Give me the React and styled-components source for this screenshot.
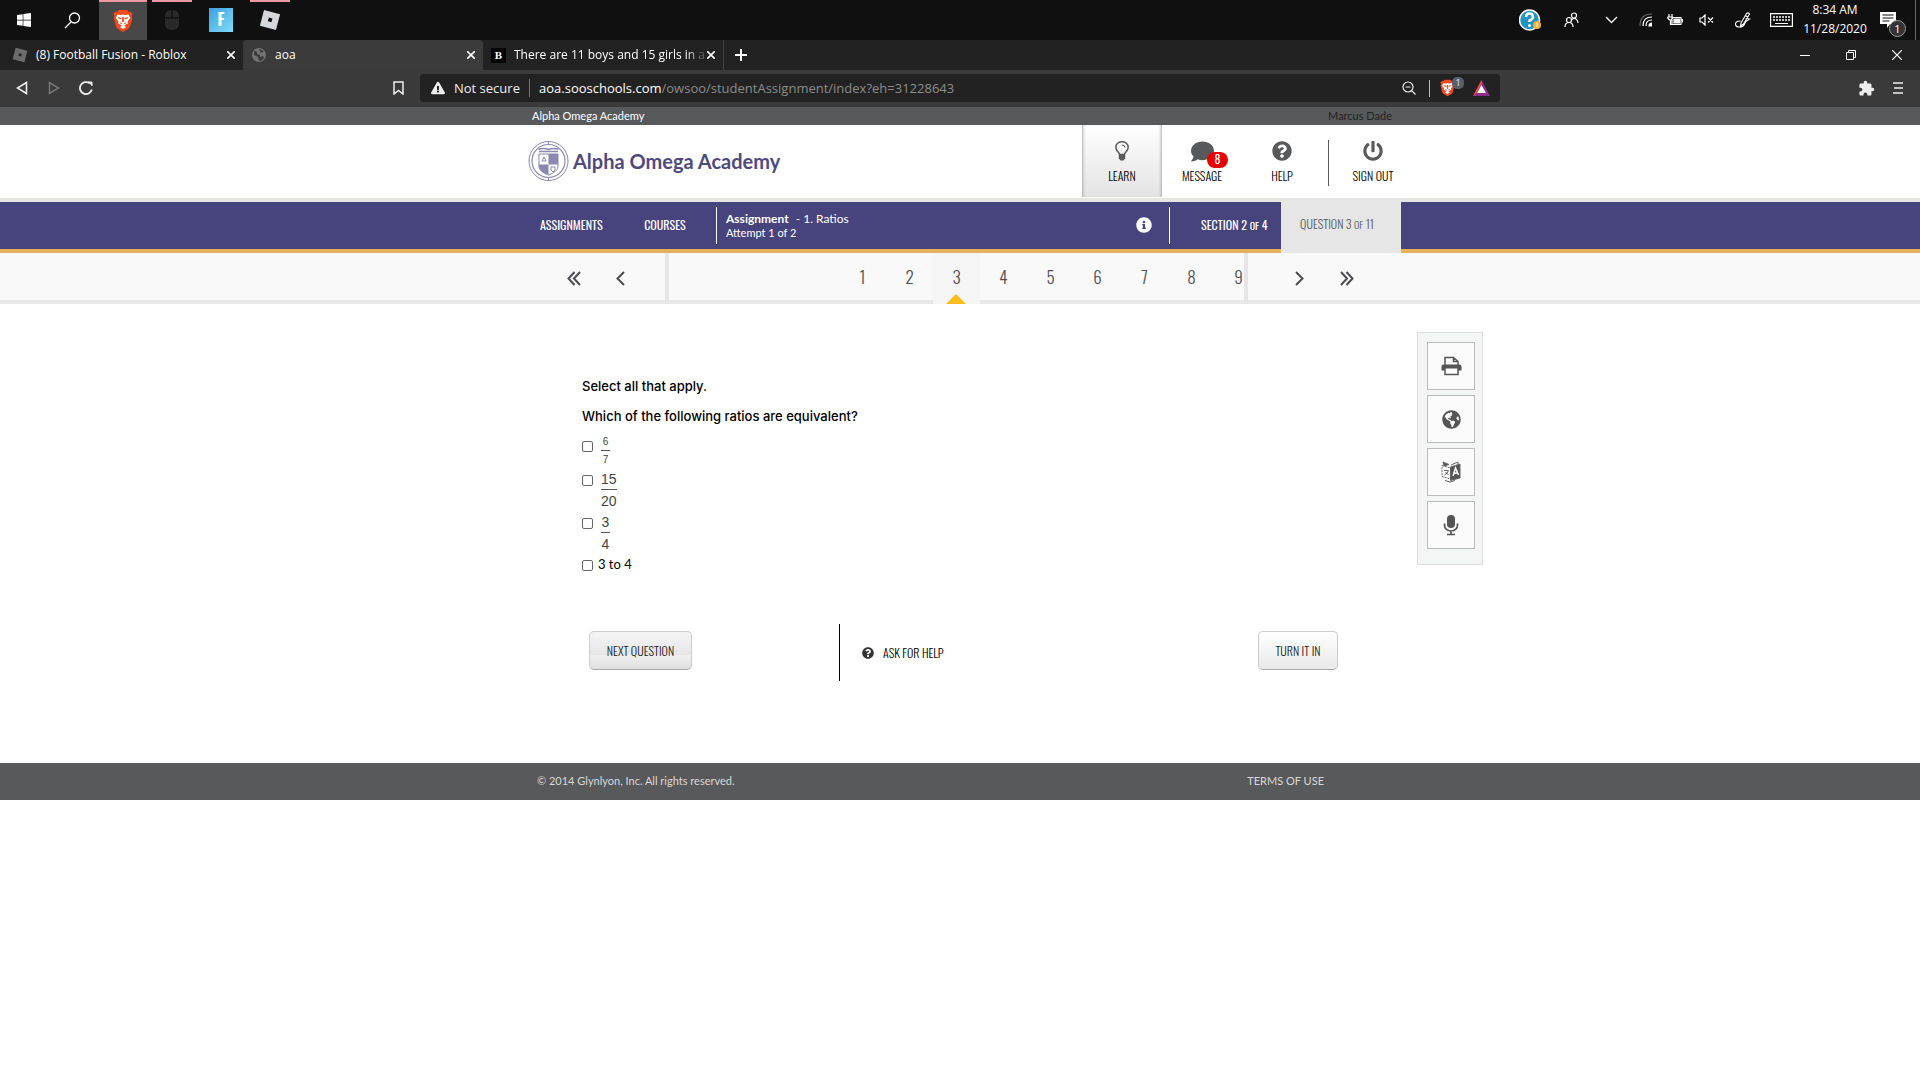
import React, { useState } from "react";
import styled, { createGlobalStyle, css } from "styled-components";
import {
  FaComment,
  FaExclamationTriangle,
  FaGlobeAmericas,
  FaInfoCircle,
  FaPowerOff,
  FaQuestionCircle,
  FaWindows,
} from "react-icons/fa";
import { MdExtension } from "react-icons/md";

const ui = `"Segoe UI", "Open Sans", "Noto Sans", sans-serif`;
const body = `"Proxima Nova", Inter, "Liberation Sans", sans-serif`;
const small = `Lato, "Liberation Sans", sans-serif`;
const narrow = `Oswald, "Liberation Sans Narrow", "Roboto Condensed", sans-serif`;

const GlobalStyle = createGlobalStyle`
  * { box-sizing: border-box; }
  body { margin: 0; background: #fff; font-family: ${body}; color: #000; }
  button, input { font: inherit; color: inherit; }
  button { padding: 0; border: 0; background: none; cursor: pointer; }
  a { color: inherit; text-decoration: none; }
  p { margin: 0; }
  svg { display: block; flex: none; }
`;

/* ---------- Windows taskbar ---------- */

const Taskbar = styled.header`
  display: flex;
  justify-content: space-between;
  height: 40px;
  background: #101010;
  color: #fff;
  font: 12px/19px ${ui};
`;

const TaskGroup = styled.div`
  display: flex;
`;

const TaskApp = styled.button`
  display: flex;
  align-items: center;
  justify-content: center;
  width: ${(p) => p.$width}px;
  margin-left: ${(p) => p.$gap || 0}px;
  border-top: 2px solid ${(p) => (p.$running ? "#ef98a4" : "transparent")};
  border-bottom: 2px solid transparent;
  background: ${(p) => (p.$active ? "#484848" : "transparent")};
  background-clip: padding-box;
  ${(p) => p.$active && css`border-bottom-color: #484848;`}
`;

const TrayItem = styled.button`
  display: flex;
  align-items: center;
  justify-content: center;
  width: ${(p) => p.$width}px;
`;

const Clock = styled.time`
  width: 74px;
  text-align: center;
`;

const ShowDesktop = styled.span`
  width: 5px;
  border-left: 1px solid #666;
  margin-left: 7px;
`;

const Notice = styled.button`
  position: relative;
  display: flex;
  align-items: center;
  justify-content: center;
  width: 32px;
  margin: 0 4px 0 0;
`;

const NoticeCount = styled.span`
  position: absolute;
  right: -2px;
  bottom: 3px;
  width: 17px;
  height: 17px;
  border: 1px solid #999;
  border-radius: 50%;
  background: #333;
  font-size: 11px;
  line-height: 15px;
`;

/* ---------- Browser chrome ---------- */

const TabStrip = styled.nav`
  display: flex;
  height: 30px;
  background: #222;
  color: #fff;
  font: 12px/30px ${ui};
`;

const Tab = styled.div`
  display: flex;
  align-items: center;
  width: 240px;
  padding: 0 6px 0 8px;
  background: ${(p) => (p.$active ? "#3b3b3b" : "transparent")};
  border-radius: 4px 4px 0 0;
  ${(p) => p.$first && css`width: 243px; padding-left: 12px;`}
`;

const TabTitle = styled.a`
  flex: 1;
  min-width: 0;
  margin-left: 8px;
  white-space: nowrap;
  ${(p) => p.$fade && css`mask-image: linear-gradient(90deg, #000 90%, #0004 98%);`}
`;

const TabClose = styled.button`
  display: grid;
  place-items: center;
  width: 12px;
  height: 12px;
`;

const NewTab = styled.button`
  width: 34px;
  display: grid;
  place-items: center;
  border-left: 1px solid #444;
`;

const WindowControls = styled.div`
  display: flex;
  margin-left: auto;
`;

const WindowButton = styled.button`
  display: grid;
  place-items: center;
  width: 46px;
`;

const AddressRow = styled.div`
  display: flex;
  align-items: center;
  height: 37px;
  padding: 0 14px 1px;
  background: #3a3a3a;
  color: #eee;
  font: 14px/28px ${ui};
`;

const ChromeButton = styled.button`
  display: grid;
  place-items: center;
  width: 16px;
  height: 20px;
  margin-right: ${(p) => p.$after || 0}px;
`;

const AddressBox = styled.form`
  display: flex;
  align-items: center;
  flex: 0 1 1080px;
  height: 28px;
  margin: 0 auto 0 14px;
  padding: 0 11px;
  border-radius: 4px;
  background: #222;
  font-size: 13px;
`;

const Site = styled.label`
  margin-left: 9px;
  color: #fff;
`;

const Insecure = styled.span`
  width: 67px;
  margin-left: 9px;
  white-space: nowrap;
`;

const PathInput = styled.input`
  flex: 1;
  min-width: 0;
  padding: 0;
  border: 0;
  outline: 0;
  background: none;
  color: #8c8c8c;
`;

const ThinBar = styled.span`
  width: 1px;
  height: ${(p) => p.$height}px;
  margin-left: ${(p) => p.$gap || 8}px;
  background: ${(p) => p.$color || "#777"};
`;

const Shield = styled.button`
  position: relative;
  width: 20px;
  margin: 0 13px 0 10px;
`;

const ShieldCount = styled.span`
  position: absolute;
  left: 12px;
  top: -2px;
  width: 12px;
  height: 12px;
  border-radius: 5px;
  background: #5a5e6c;
  font-size: 9px;
  line-height: 12px;
  text-align: center;
`;

/* ---------- Page ---------- */

const Wrap = styled.div`
  display: flex;
  width: 882px;
  max-width: 100%;
  height: 100%;
  margin: 0 auto;
`;

const AccountBar = styled.div`
  height: 18px;
  background: #58595b;
  color: #fff;
  font: 11px/18px ${small};
`;

const SchoolName = styled.a`
  margin-left: 13px;
`;

const UserName = styled.a`
  margin-left: auto;
  margin-right: 9px;
  color: #222;
`;

const Masthead = styled.div`
  height: 77px;
  border-bottom: 4px solid #e6e6e3;
`;

const Brand = styled.a`
  display: flex;
  align-items: center;
  gap: 4px;
  margin-left: 9px;
  padding-bottom: 1px;
  color: #4e4a80;
  font: 700 20px/24px Lato, sans-serif;
`;

const MainMenu = styled.nav`
  display: flex;
  margin-left: auto;
`;

const MenuLink = styled.a`
  position: relative;
  display: flex;
  flex-direction: column;
  align-items: center;
  width: ${(p) => p.$width || 80}px;
  height: 72px;
  padding-top: 15px;
  color: #58595b;
  ${(p) =>
    p.$active &&
    css`
      background: linear-gradient(#fff, #e3e3e3);
      box-shadow: inset 3px 0 3px -2px #aaa, inset -3px 0 3px -2px #aaa;
    `}
`;

const MenuText = styled.span`
  margin-top: 5px;
  color: #000;
  font: 300 12px/18px ${narrow};
  white-space: nowrap;
`;

const IconBox = styled.span`
  display: grid;
  place-items: center;
  height: 22px;
`;

const MessageCount = styled.span`
  position: absolute;
  left: 45px;
  top: 27px;
  width: 21px;
  height: 16px;
  border-radius: 8px;
  background: #e60000;
  color: #fff;
  font: 12px/14px ${narrow};
  text-align: center;
`;

const MenuRule = styled.span`
  width: 1px;
  height: 46px;
  margin: 15px 16px 0 6px;
  background: #58595b;
`;

const CourseBar = styled.nav`
  height: 51px;
  border-bottom: 4px solid #e6b158;
  background: #47437d;
  color: #fff;
`;

const CourseLink = styled.a`
  width: ${(p) => p.$width}px;
  margin-left: ${(p) => p.$before}px;
  font: 12px/46px ${narrow};
  text-align: center;
  white-space: nowrap;
`;

const CourseRule = styled.span`
  width: 1px;
  height: 37px;
  margin: 5px 0 0 ${(p) => p.$before}px;
  background: #fff;
`;

const AssignmentInfo = styled.div`
  margin: 9px auto 0 9px;
  font: 12px/16px ${small};
`;

const Attempt = styled.p`
  font-size: 11px;
  line-height: 12px;
`;

const Gap = styled.span`
  margin-left: 7px;
`;

const InfoButton = styled.button`
  height: 46px;
`;

const Small = styled.span`
  font-size: 10px;
`;

const QuestionTab = styled.a`
  width: 120px;
  height: 55px;
  margin-top: -4px;
  margin-left: 16px;
  padding-right: 27px;
  background: #e6e6e6;
  color: #58595b;
  font: 300 12px/52px ${narrow};
  text-align: right;
  white-space: nowrap;
`;

const Pager = styled.nav`
  height: 51px;
  border-bottom: 4px solid #e8e8e8;
  background: #f9f9f9;
  color: #4c4d4f;
`;

const PagerEnd = styled.div`
  display: flex;
  width: ${(p) => p.$width}px;
  padding-left: ${(p) => p.$before}px;
`;

const PagerArrow = styled.button`
  display: grid;
  place-items: center;
  width: 47px;
  height: 50px;
`;

const Numbers = styled.div`
  display: flex;
  flex: 1;
  height: 51px;
  padding-left: 170px;
  border: solid #e6e6e6;
  border-width: 0 4px;
  overflow: hidden;
`;

const NumberLink = styled.a`
  position: relative;
  flex: 0 0 47px;
  height: 51px;
  font: 300 17px/48px ${narrow};
  text-align: center;
  ${(p) =>
    p.$current &&
    css`
      background: #f5f5f5;
      &::after {
        content: "";
        position: absolute;
        left: 13px;
        bottom: 0;
        border: solid transparent;
        border-width: 0 10px 10px;
        border-bottom-color: #fbbc1c;
      }
    `}
`;

const Workspace = styled.main`
  display: grid;
  grid-template-columns: 1fr 882px 1fr;
  padding-top: 28px;
`;

const Question = styled.section`
  grid-column: 2;
  padding: 44px 63px 82px;
`;

const Prompt = styled.p`
  font: 500 13px/20px ${body};
  margin-bottom: 10px;
`;

const Choice = styled.label`
  display: flex;
  align-items: flex-start;
  height: ${(p) => p.$height}px;
  width: 100px;
`;

const Tick = styled.input`
  width: 11px;
  height: 11px;
  margin: ${(p) => p.$top}px 0 0;
  appearance: none;
  border: 1px solid #666;
  border-radius: 2px;
  background: #fff;
  &:checked { background: #0075ff; }
`;

const Fraction = styled.span`
  display: inline-flex;
  flex-direction: column;
  align-items: center;
  margin-left: 8px;
  color: #444;
  font: ${(p) => (p.$small ? "10px/12px" : "14px/16px")} "Liberation Sans", Arial, sans-serif;
`;

const Over = styled.span`
  min-width: 9px;
  padding-bottom: 2px;
  border-bottom: 1px solid #555;
  margin-bottom: 3px;
  text-align: center;
`;

const Plain = styled.span`
  margin-left: 5px;
  font: 13px/16px ${small};
`;

const Actions = styled.div`
  display: flex;
  align-items: center;
  height: 57px;
  margin-top: 46px;
  padding-left: 7px;
`;

const ActionButton = styled.button`
  width: ${(p) => p.$width}px;
  height: 39px;
  margin-bottom: 4px;
  border: 1px solid #ccc;
  border-bottom-color: #aaa;
  border-radius: 5px;
  background: ${(p) => (p.$shaded ? "linear-gradient(#f5f5f5, #e6e6e6 62%, #f0f0f0 63%, #dfdfdf)" : "linear-gradient(#fff, #e9e9e9)")};
  color: #222;
  font: 300 12px/37px ${narrow};
`;

const ActionRule = styled.span`
  width: 1px;
  height: 57px;
  margin: 0 22px 0 147px;
  background: #000;
`;

const AskLink = styled.a`
  display: flex;
  align-items: center;
  gap: 9px;
  margin-right: auto;
  font: 300 12px/18px ${narrow};
`;

const Tools = styled.aside`
  display: flex;
  flex-direction: column;
  gap: 5px;
  width: 66px;
  height: 233px;
  margin-left: 16px;
  padding: 9px;
  border: 1px solid #dedede;
  background: #f4f5f5;
`;

const ToolButton = styled.button`
  display: grid;
  place-items: center;
  height: 48px;
  width: 48px;
  border: 1px solid #bbb;
  background: #fbfbfb;
  color: #555;
`;

const Footer = styled.footer`
  height: 37px;
  background: #58595b;
  color: #d8d8d8;
  font: 11px/36px ${small};
`;

const Copyright = styled.span`
  margin-left: 18px;
`;

const Terms = styled.a`
  margin-left: auto;
  margin-right: 77px;
`;

/* ---------- Drawings ---------- */

const BraveIcon = ({ size }) => (
  <svg width={size} height={size * 1.15} viewBox="0 0 20 23">
    <path fill="#f2491f" d="M6 1h8l2 2 2-.3L19.500 5l-.8 2 .6 2-2.300 8.500c-.3 1-1 1.800-2 2.400L10 23l-5-3.100c-1-.6-1.700-1.400-2-2.400L.7 9l.6-2-.8-2L2 2.700 4 3z" />
    <path fill="#fff" d="M4.500 5.500 8 6l2-.6L12 6l3.500-.5L17.300 9 14.500 12.500l.5 1.800-3 1.700-.5 1 1.500 1-3 2-3-2 1.500-1-.5-1-3-1.700.5-1.800L2.700 9z" />
    <path fill="#f2491f" d="m4.700 8 3.800 1-.3 1.500-2.500-.7zM15.300 8l-3.800 1 .3 1.500 2.500-.7zM9.300 8h1.400l.4 4.500-1.100.7-1.100-.7zM6.500 13l3 1.500-1.500.8zM13.500 13l-3 1.500 1.500.8z" />
  </svg>
);

const RobloxIcon = ({ size, light, hole }) => (
  <svg width={size} height={size} viewBox="0 0 24 24">
    <path fill={light} d="M5.500 1 23 5.700 18.500 23 1 18.300z" />
    <path fill={hole} d="m10.700 9.300 4 1.100-1.100 4-4-1.100z" />
  </svg>
);

const MouseIcon = () => (
  <svg width="14" height="20" viewBox="0 0 14 20">
    <rect width="14" height="20" rx="6" fill="#292929" />
    <path d="M0 8h14M7 0v8" stroke="#101010" strokeWidth="1.500" />
  </svg>
);

const FortniteTile = styled.span`
  display: block;
  width: 24px;
  height: 24px;
  background: linear-gradient(135deg, #3f9fe0, #7fdcf8);
  color: #fff;
  font: 700 16px/23px ${narrow};
  text-align: center;
`;

const Cross = ({ size = 8, weight = 2 }) => (
  <svg width={size} height={size} viewBox="0 0 10 10">
    <path d="m0 0 10 10M10 0 0 10" stroke="currentColor" strokeWidth={weight} />
  </svg>
);

const Line = ({ w, h, box, d, weight = 1, fill = "none", children }) => (
  <svg width={w} height={h} viewBox={box || `0 0 ${w} ${h}`} fill={fill} stroke="currentColor" strokeWidth={weight}>
    {d && <path d={d} />}
    {children}
  </svg>
);

const BrainlyMark = styled.span`
  width: 15px;
  height: 15px;
  background: #000;
  font: 700 11px/15px "Liberation Serif", serif;
  text-align: center;
`;

const Seal = () => (
  <svg width="41" height="42" viewBox="0 0 41 42" fill="none" stroke="#8a87b0">
    <circle cx="20.500" cy="21" r="19.500" />
    <circle cx="20.500" cy="21" r="16.500" strokeWidth="1.200" />
    <path d="M10.500 9.500q5-2 10 0 5-2 10 0M11 11.500h19" strokeWidth="1.500" />
    <path d="M11 14h19v13q-1 5-9.500 8-8.500-3-9.500-8z" fill="#fff" />
    <path d="M20.500 14H30v10.500h-9.500zM11 24.500h9.500V35q-8.500-3-9.500-8z" fill="#8a87b0" stroke="none" />
    <path d="m14 21 2-4 2 4zM23 27h4v3l-2 2-2-2z" />
    <path d="M20.500 1v4M20.500 37v4" />
  </svg>
);

const Bulb = () => (
  <svg width="14" height="20" viewBox="0 0 14 20" fill="none" stroke="#58595b" strokeWidth="1.500">
    <path d="M4.500 13.500c0-2.500-3.700-3.500-3.700-7.300a6.200 5.500 0 0 1 12.400 0c0 3.800-3.700 4.800-3.700 7.300z" />
    <path d="M7 4q2.800 0 3 2.500" strokeWidth="1" />
    <path d="M3.800 13.500h6.400v4L8.500 19.500h-3L3.800 17.500z" fill="#58595b" stroke="none" />
  </svg>
);

const Printer = () => (
  <svg width="21" height="20" viewBox="0 0 21 20" fill="none" stroke="#555" strokeWidth="1.500">
    <path d="M4 9V1.500h8.500L17 5.500V9M12.500 1.500v4H17" />
    <path d="M2.500 8.500h16a2 2 0 0 1 2 2v4H17v-2H4v2H.5v-4a2 2 0 0 1 2-2z" fill="#555" stroke="none" />
    <path d="M4 12v6.500h13V12" />
  </svg>
);

const Translate = () => (
  <svg width="20" height="22" viewBox="0 0 20 22" fill="none" stroke="#666">
    <path d="M1 4.500 9.500 7v11L1 15.500z" strokeDasharray="2 1" />
    <path d="M9.500 6 19 3v14l-9.500 2.500z" fill="#555" />
    <path d="m2 1 6 2.500L3 5z" fill="#555" />
    <path d="m10 4 7-3v3M3 9.500h4.500q-1 3-4 4.500m1-3 3 3M4 19.500q5 3 10 0" />
    <path d="m12 15 2.500-8 3 7M13 12.500l3.500-.8" stroke="#fff" strokeWidth="1.500" />
  </svg>
);

const Mic = () => (
  <svg width="16" height="22" viewBox="0 0 16 22" fill="none" stroke="#555" strokeWidth="1.700">
    <rect x="4" y="1" width="8" height="13" rx="4" fill="#555" stroke="none" />
    <path d="M1.500 9.500v2a6.500 5.500 0 0 0 13 0v-2M8 17v3.500M4 20.500h8" />
  </svg>
);

/* ---------- Screen ---------- */

const choices = [
  { id: "c1", height: 35, tick: 5, small: true, top: "6", bottom: "7" },
  { id: "c2", height: 43, tick: 4, top: "15", bottom: "20" },
  { id: "c3", height: 42, tick: 4, top: "3", bottom: "4" },
  { id: "c4", height: 22, tick: 4, text: "3 to 4" },
];

function ChoiceRow({ item, checked, onToggle }) {
  return (
    <Choice $height={item.height} htmlFor={item.id}>
      <Tick id={item.id} type="checkbox" $top={item.tick} checked={checked} onChange={onToggle} />
      {item.text ? (
        <Plain>{item.text}</Plain>
      ) : (
        <Fraction $small={item.small}>
          <Over>{item.top}</Over>
          <span>{item.bottom}</span>
        </Fraction>
      )}
    </Choice>
  );
}

export default function App() {
  const [picked, setPicked] = useState({});
  return (
    <>
      <GlobalStyle />
      <Taskbar>
        <TaskGroup>
          <TaskApp $width={48} aria-label="Start"><FaWindows size={16} /></TaskApp>
          <TaskApp $width={48} aria-label="Search">
            <Line w={17} h={17} weight={1.3}><circle cx="10.500" cy="6" r="5" /><path d="m7 10-6 6" /></Line>
          </TaskApp>
          <TaskApp $width={48} $gap={3} $running $active aria-label="Brave"><BraveIcon size={20} /></TaskApp>
          <TaskApp $width={40} $gap={5} $running aria-label="Mouse"><MouseIcon /></TaskApp>
          <TaskApp $width={40} $gap={9} aria-label="Fortnite"><FortniteTile>F</FortniteTile></TaskApp>
          <TaskApp $width={40} $gap={9} $running aria-label="Roblox"><RobloxIcon size={22} light="#d5d7da" hole="#111" /></TaskApp>
        </TaskGroup>
        <TaskGroup>
          <TrayItem $width={40} aria-label="Support">
            <svg width="22" height="22" viewBox="0 0 22 22">
              <circle cx="10.500" cy="11" r="10" fill="#2196c4" stroke="#fff" strokeWidth="1.500" />
              <path d="M7 8q0-3.500 3.500-3.500T14 8q0 2-3.500 3.500V13" fill="none" stroke="#fff" strokeWidth="2.500" />
              <circle cx="10.500" cy="16.500" r="1.500" fill="#fff" />
              <circle cx="18" cy="16" r="4" fill="#efb035" />
              <path d="M18 13.500v5" stroke="#fff" />
            </svg>
          </TrayItem>
          <TrayItem $width={42} aria-label="People">
            <Line w={15} h={16} weight={1.2}>
              <circle cx="10" cy="3.500" r="2.500" /><circle cx="5" cy="8" r="2.500" />
              <path d="M1 15q0-4.500 4-4.500T9 15M7.500 8Q10 5.500 12 7q2 1.500 2 4" />
            </Line>
          </TrayItem>
          <TrayItem $width={38} aria-label="More"><Line w={13} h={8} weight={1.4} d="m1 1 5.500 5.500L12 1" /></TrayItem>
          <TrayItem $width={30} aria-label="Network">
            <Line w={13} h={14} weight={1.2}>
              <path d="M1 13Q1 1 13 1" stroke="#666" /><path d="M4 13q0-9 9-9M7 13q0-6 6-6" /><path d="M10 13q0-3 3-3v3z" fill="#fff" />
            </Line>
          </TrayItem>
          <TrayItem $width={30} aria-label="Battery">
            <Line w={16} h={12} weight={1.2}>
              <path d="M5 3.500h9v7H5zM2 0v3M5 0v3M.5 3h5q0 3-2 3t-3-3M3.500 6v4.500H5" /><path d="M7 5h5.500v4H7zM14.500 5.500h1v3" fill="#fff" />
            </Line>
          </TrayItem>
          <TrayItem $width={32} aria-label="Volume"><Line w={15} h={12} weight={1.2} d="M1 4h2l3-3v10L3 8H1zM9 3.500l5 5m0-5-5 5" /></TrayItem>
          <TrayItem $width={42} aria-label="Pen">
            <Line w={16} h={16} weight={1.1} d="M6 11 11.500 1.500q2-1.500 3 .5L8.500 12 5.500 14zM10 3.500l3 1.500M5.500 9q-5 0-5 3t4 3 5-3q1-3 5-5-2-1-4 0" />
          </TrayItem>
          <TrayItem $width={34} aria-label="Keyboard">
            <Line w={23} h={14} weight={1.2}><path d="M.6.6h21.800v12.800H.6zM5 10.500h13" /><path d="M3 4h17M3 7h17" strokeWidth="1.500" strokeDasharray="2 1" /></Line>
          </TrayItem>
          <Clock dateTime="2020-11-28T08:34">8:34 AM<br />11/28/2020</Clock>
          <Notice aria-label="Notifications">
            <svg width="16" height="16" viewBox="0 0 16 16"><path d="M0 0h16v12h-6l-3 4v-4H0z" fill="#fff" /><path d="M2.500 3h11M2.500 6h11M2.500 9h7" stroke="#111" /></svg>
            <NoticeCount>1</NoticeCount>
          </Notice>
          <ShowDesktop />
        </TaskGroup>
      </Taskbar>

      <TabStrip>
        <Tab $first>
          <RobloxIcon size={16} light="#6c6c6c" hole="#222" />
          <TabTitle href="#roblox">(8) Football Fusion - Roblox</TabTitle>
          <TabClose aria-label="Close tab"><Cross /></TabClose>
        </Tab>
        <Tab $active>
          <svg width="16" height="16" viewBox="0 0 16 16"><circle cx="8" cy="8" r="7" fill="#737373" /><path d="M3 4q4 0 3 3l3 1v2l3-1 1 2-3 3q-3 0-3-4L3 8zM8 2l5 2-3 2z" fill="#3b3b3b" /></svg>
          <TabTitle href="#aoa">aoa</TabTitle>
          <TabClose aria-label="Close tab"><Cross /></TabClose>
        </Tab>
        <Tab>
          <BrainlyMark>B</BrainlyMark>
          <TabTitle href="#boys" $fade>There are 11 boys and 15 girls in a</TabTitle>
          <TabClose aria-label="Close tab"><Cross /></TabClose>
        </Tab>
        <NewTab aria-label="New tab"><Line w={12} h={12} weight={2} d="M6 0v12M0 6h12" /></NewTab>
        <WindowControls>
          <WindowButton aria-label="Minimize"><Line w={10} h={10} d="M0 5.500h10" /></WindowButton>
          <WindowButton aria-label="Restore"><Line w={10} h={10} d="M.5 2.500h7v7h-7zM2.500 2.500v-2h7v7h-2" /></WindowButton>
          <WindowButton aria-label="Close"><Cross size={10} weight={1.2} /></WindowButton>
        </WindowControls>
      </TabStrip>

      <AddressRow>
        <ChromeButton $after={16} aria-label="Back"><Line w={12} h={14} weight={1.6} d="M10.500 1.500v11L1.500 7z" /></ChromeButton>
        <ChromeButton $after={16} aria-label="Forward"><svg width="12" height="14" fill="none" stroke="#777" strokeWidth="1.500"><path d="M1.500 1.500v11l9-5.500z" /></svg></ChromeButton>
        <ChromeButton $after={296} aria-label="Reload">
          <Line w={14} h={14} weight={1.8}><path d="M12.800 8.500A6 6 0 1 1 10.500 2.200" /><path d="M9 1h4v4" fill="currentColor" strokeWidth="1" /></Line>
        </ChromeButton>
        <ChromeButton aria-label="Bookmark"><Line w={11} h={14} weight={1.5} d="M1 1h9v12l-4.500-3.500L1 13z" /></ChromeButton>
        <AddressBox onSubmit={(e) => e.preventDefault()}>
          <FaExclamationTriangle size={14} />
          <Insecure>Not secure</Insecure>
          <ThinBar $height={18} />
          <Site htmlFor="path">aoa.sooschools.com</Site>
          <PathInput id="path" defaultValue="/owsoo/studentAssignment/index?eh=31228643" />
          <ChromeButton type="button" aria-label="Zoom"><Line w={14} h={14} weight={1.2}><circle cx="6" cy="6" r="5" /><path d="m9.500 9.500 4 4M3.500 6h5" /></Line></ChromeButton>
          <ThinBar $height={17} $gap={12} $color="#bbb" />
          <Shield type="button" aria-label="Shields"><BraveIcon size={15} /><ShieldCount>1</ShieldCount></Shield>
          <ChromeButton type="button" aria-label="Rewards">
            <svg width="17" height="16" viewBox="0 0 17 16"><path d="M8.500 0 17 16H0z" fill="#8a2c8c" /><path d="M8.500 0 0 16l3-2 6-11z" fill="#f0502c" /><path d="m8.500 5 4.500 8H4z" fill="#fff" /></svg>
          </ChromeButton>
        </AddressBox>
        <ChromeButton $after={16} aria-label="Extensions"><MdExtension size={17} /></ChromeButton>
        <ChromeButton aria-label="Menu"><Line w={10} h={12} weight={1.6} d="M0 1h10M1 6h9M0 11h10" /></ChromeButton>
      </AddressRow>

      <AccountBar>
        <Wrap>
          <SchoolName href="#school">Alpha Omega Academy</SchoolName>
          <UserName href="#user">Marcus Dade</UserName>
        </Wrap>
      </AccountBar>

      <Masthead>
        <Wrap>
          <Brand href="#home"><Seal />Alpha Omega Academy</Brand>
          <MainMenu>
            <MenuLink href="#learn" $active><IconBox><Bulb /></IconBox><MenuText>LEARN</MenuText></MenuLink>
            <MenuLink href="#message">
              <IconBox><FaComment size={23} /></IconBox>
              <MenuText>MESSAGE</MenuText>
              <MessageCount>8</MessageCount>
            </MenuLink>
            <MenuLink href="#help"><IconBox><FaQuestionCircle size={20} /></IconBox><MenuText>HELP</MenuText></MenuLink>
            <MenuRule />
            <MenuLink href="#out" $width={56}><IconBox><FaPowerOff size={20} /></IconBox><MenuText>SIGN OUT</MenuText></MenuLink>
          </MainMenu>
        </Wrap>
      </Masthead>

      <CourseBar>
        <Wrap>
          <CourseLink href="#assignments" $width={62} $before={21}>ASSIGNMENTS</CourseLink>
          <CourseLink href="#courses" $width={42} $before={42}>COURSES</CourseLink>
          <CourseRule $before={30} />
          <AssignmentInfo>
            <p><b>Assignment</b><Gap>- 1. Ratios</Gap></p>
            <Attempt>Attempt 1 of 2</Attempt>
          </AssignmentInfo>
          <InfoButton aria-label="Info"><FaInfoCircle size={16} /></InfoButton>
          <CourseRule $before={17} />
          <CourseLink href="#section" $width={64} $before={31}>SECTION 2 <Small>OF</Small> 4</CourseLink>
          <QuestionTab href="#question">QUESTION 3 <Small>OF</Small> 11</QuestionTab>
        </Wrap>
      </CourseBar>

      <Pager>
        <Wrap>
          <PagerEnd $width={146} $before={31}>
            <PagerArrow aria-label="First"><Line w={14} h={15} weight={2} d="M7.500 1 1.500 7.500l6 6.500M13 1 7 7.500l6 6.500" /></PagerArrow>
            <PagerArrow aria-label="Previous"><Line w={9} h={15} weight={2} d="M8 1 1.500 7.500 8 14" /></PagerArrow>
          </PagerEnd>
          <Numbers>
            {[1, 2, 3, 4, 5, 6, 7, 8, 9].map((n) => (
              <NumberLink key={n} href={`#q${n}`} $current={n === 3}>{n}</NumberLink>
            ))}
          </Numbers>
          <PagerEnd $width={153} $before={28}>
            <PagerArrow aria-label="Next"><Line w={9} h={15} weight={2} d="m1 1 6.500 6.500L1 14" /></PagerArrow>
            <PagerArrow aria-label="Last"><Line w={14} h={15} weight={2} d="m1 1 6 6.500L1 14M6.500 1l6 6.500-6 6.500" /></PagerArrow>
          </PagerEnd>
        </Wrap>
      </Pager>

      <Workspace>
        <Question>
          <Prompt>Select all that apply.</Prompt>
          <Prompt>Which of the following ratios are equivalent?</Prompt>
          {choices.map((item) => (
            <ChoiceRow
              key={item.id}
              item={item}
              checked={!!picked[item.id]}
              onToggle={() => setPicked({ ...picked, [item.id]: !picked[item.id] })}
            />
          ))}
          <Actions>
            <ActionButton $width={103} $shaded>NEXT QUESTION</ActionButton>
            <ActionRule />
            <AskLink href="#ask"><FaQuestionCircle size={12} color="#333" />ASK FOR HELP</AskLink>
            <ActionButton $width={80}>TURN IT IN</ActionButton>
          </Actions>
        </Question>
        <Tools>
          <ToolButton aria-label="Print"><Printer /></ToolButton>
          <ToolButton aria-label="Web"><FaGlobeAmericas size={19} /></ToolButton>
          <ToolButton aria-label="Translate"><Translate /></ToolButton>
          <ToolButton aria-label="Record"><Mic /></ToolButton>
        </Tools>
      </Workspace>

      <Footer>
        <Wrap>
          <Copyright>© 2014 Glynlyon, Inc. All rights reserved.</Copyright>
          <Terms href="#terms">TERMS OF USE</Terms>
        </Wrap>
      </Footer>
    </>
  );
}
